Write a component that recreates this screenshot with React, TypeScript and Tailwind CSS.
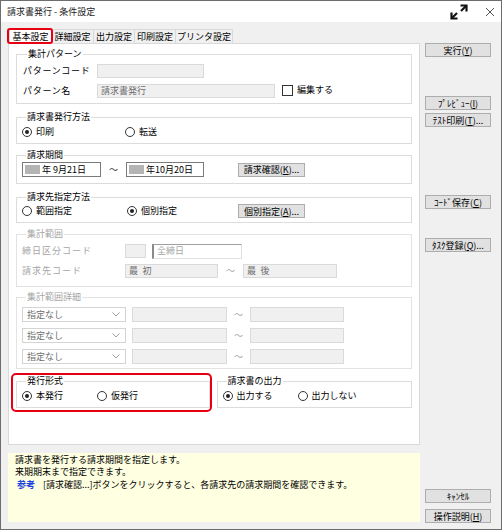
import React from 'react';

const Radio = ({ checked = false, label, className = '' }: { checked?: boolean; label: string; className?: string }) => (
  <span className={`flex items-center gap-[4px] ${className}`}>
    <span className="w-[10px] h-[10px] rounded-full border border-[#333] bg-white flex items-center justify-center shrink-0">
      {checked && <span className="w-[4px] h-[4px] rounded-full bg-[#222]" />}
    </span>
    <span>{label}</span>
  </span>
);

const Btn = ({ children, className = '' }: { children: React.ReactNode; className?: string }) => (
  <div className={`h-[14px] bg-[#e1e1e1] border border-[#adadad] flex items-center justify-center leading-none ${className}`}>
    {children}
  </div>
);

const Group = ({
  title,
  children,
  className = '',
  disabled = false,
}: {
  title: string;
  children: React.ReactNode;
  className?: string;
  disabled?: boolean;
}) => (
  <fieldset className={`border ${disabled ? 'border-[#e3e3e3] text-[#a6a6a6]' : 'border-[#dcdcdc]'} ${className}`}>
    <legend className="ml-[4px] px-[1px] leading-[12px]">{title}</legend>
    {children}
  </fieldset>
);

const Chevron = () => (
  <svg width="8" height="5" viewBox="0 0 8 5" className="shrink-0">
    <path d="M0.5 0.5 L4 4 L7.5 0.5" fill="none" stroke="#a0a0a0" strokeWidth="1" />
  </svg>
);

const DetailRow = () => (
  <div className="flex items-center h-[15px]">
    <div className="w-[104px] h-[15px] bg-white border border-[#d4d4d4] flex items-center justify-between pl-[4px] pr-[5px] text-[#6d6d6d]">
      <span>指定なし</span>
      <Chevron />
    </div>
    <div className="ml-[6px] w-[95px] h-[15px] bg-[#f0f0f0] border border-[#dadada]" />
    <span className="w-[23px] text-center text-[#a6a6a6]">～</span>
    <div className="w-[94px] h-[15px] bg-[#f0f0f0] border border-[#dadada]" />
  </div>
);

export default function App() {
  return (
    <div className="w-[502px] h-[530px] border border-[#6d6d6d] bg-[#f0f0f0] flex flex-col text-[9px] text-black font-['Noto_Sans_CJK_JP',sans-serif] overflow-hidden">
      {/* title bar */}
      <div className="h-[21px] bg-white flex items-center pl-[6px] pr-[6px] shrink-0">
        <span className="text-[#222]">請求書発行 - 条件設定</span>
        <div className="ml-auto flex items-center gap-[17px]">
          <svg width="18" height="16" viewBox="0 0 18 16">
            <path d="M2 14 L7 9" stroke="#111" strokeWidth="2.2" fill="none" />
            <path d="M1.5 8.5 L1.5 14.5 L7.5 14.5" stroke="#111" strokeWidth="2.2" fill="none" />
            <path d="M11 7 L16 2" stroke="#111" strokeWidth="2.2" fill="none" />
            <path d="M10.5 1.5 L16.5 1.5 L16.5 7.5" stroke="#111" strokeWidth="2.2" fill="none" />
          </svg>
          <svg width="10" height="10" viewBox="0 0 10 10">
            <path d="M1 1 L9 9 M9 1 L1 9" stroke="#555" strokeWidth="1" />
          </svg>
        </div>
      </div>

      <div className="flex flex-1 pl-[7px]">
        {/* left column */}
        <div className="w-[412px] flex flex-col pt-[5px] pb-[6px]">
          {/* tabs */}
          <div className="flex items-end h-[16px] pl-[1px]">
            <div className="relative w-[43px] h-[16px] bg-white border border-b-0 border-[#d9d9d9] flex items-center justify-center z-10 -mb-[1px]">
              基本設定
              <span className="absolute -left-[3px] -right-[2px] -top-[1px] -bottom-[0px] border-2 border-[#e60012] rounded-[3px]" />
            </div>
            <div className="w-[42px] h-[14px] bg-[#f0f0f0] border border-b-0 border-l-0 border-[#d9d9d9] flex items-center justify-center">詳細設定</div>
            <div className="w-[41px] h-[14px] bg-[#f0f0f0] border border-b-0 border-l-0 border-[#d9d9d9] flex items-center justify-center">出力設定</div>
            <div className="w-[41px] h-[14px] bg-[#f0f0f0] border border-b-0 border-l-0 border-[#d9d9d9] flex items-center justify-center">印刷設定</div>
            <div className="w-[57px] h-[14px] bg-[#f0f0f0] border border-b-0 border-l-0 border-[#d9d9d9] flex items-center justify-center">プリンタ設定</div>
          </div>

          {/* panel */}
          <div className="h-[402px] bg-white border border-[#d9d9d9] px-[7px] pt-[4px] flex flex-col">
            <Group title="集計パターン" className="pl-[6px] pt-[4px] pb-[5px]">
              <div className="flex items-center h-[14px]">
                <span className="w-[74px] tracking-[0.7px]">パターンコード</span>
                <div className="w-[107px] h-[14px] bg-[#f0f0f0] border border-[#dadada]" />
              </div>
              <div className="flex items-center h-[14px] mt-[6px]">
                <span className="w-[74px] tracking-[0.7px]">パターン名</span>
                <div className="w-[178px] h-[14px] bg-[#f0f0f0] border border-[#dadada] flex items-center pl-[3px] text-[#6d6d6d]">請求書発行</div>
                <span className="ml-[7px] w-[11px] h-[11px] border border-[#333] bg-white -mt-[2px]" />
                <span className="ml-[4px] -mt-[2px]">編集する</span>
              </div>
            </Group>

            <Group title="請求書発行方法" className="mt-[7px] pl-[5px] pt-[3px] pb-[5px]">
              <div className="flex items-center h-[12px]">
                <Radio checked label="印刷" className="w-[103px]" />
                <Radio label="転送" />
              </div>
            </Group>

            <Group title="請求期間" className="mt-[5px] pl-[5px] pt-[1px] pb-[6px]">
              <div className="flex items-center h-[15px]">
                <div className="w-[79px] h-[15px] bg-white border border-[#7a7a7a] flex items-center pl-[2px]">
                  <span className="w-[15px] h-[9px] bg-[#b4b4b4]" />
                  <span className="ml-[2px]">年 9月21日</span>
                </div>
                <span className="w-[25px] text-center text-[#333]">～</span>
                <div className="w-[78px] h-[15px] bg-white border border-[#7a7a7a] flex items-center pl-[2px]">
                  <span className="w-[15px] h-[9px] bg-[#b4b4b4]" />
                  <span className="ml-[2px]">年10月20日</span>
                </div>
                <Btn className="ml-[34px] w-[67px]">
                  請求確認(<span className="underline">K</span>)...
                </Btn>
              </div>
            </Group>

            <Group title="請求先指定方法" className="mt-[7px] pl-[5px] pt-[1px] pb-[4px]">
              <div className="flex items-center h-[14px]">
                <Radio label="範囲指定" className="w-[105px]" />
                <Radio checked label="個別指定" className="w-[111px]" />
                <Btn className="w-[67px]">
                  個別指定(<span className="underline">A</span>)...
                </Btn>
              </div>
            </Group>

            <Group title="集計範囲" disabled className="mt-[5px] pl-[5px] pt-[4px] pb-[8px]">
              <div className="flex items-center h-[14px]">
                <span className="w-[103px] tracking-[1px]">締日区分コード</span>
                <div className="w-[21px] h-[14px] bg-[#f0f0f0] border border-[#dadada]" />
                <div className="ml-[6px] w-[90px] h-[15px] bg-white border border-[#e0e0e0] border-l-2 border-l-[#8a8a8a] border-t-[#a0a0a0] flex items-center pl-[3px]">全締日</div>
              </div>
              <div className="flex items-center h-[14px] mt-[6px]">
                <span className="w-[103px] tracking-[1px]">請求先コード</span>
                <div className="w-[93px] h-[14px] bg-[#f0f0f0] border border-[#dadada] flex items-center pl-[3px] text-[#6d6d6d]">{'最\u2002初'}</div>
                <span className="w-[25px] text-center">～</span>
                <div className="w-[94px] h-[14px] bg-[#f0f0f0] border border-[#dadada] flex items-center pl-[3px] text-[#6d6d6d]">{'最\u2002後'}</div>
              </div>
            </Group>

            <Group title="集計範囲詳細" disabled className="mt-[4px] pl-[5px] pt-[4px] pb-[4px]">
              <div className="flex flex-col gap-[6px]">
                <DetailRow />
                <DetailRow />
                <DetailRow />
              </div>
            </Group>

            <div className="mt-[6px] flex gap-[7px]">
              <div className="relative w-[194px]">
                <Group title="発行形式" className="pl-[5px] pt-[3px] pb-[5px]">
                  <div className="flex items-center h-[12px]">
                    <Radio checked label="本発行" className="w-[75px]" />
                    <Radio label="仮発行" />
                  </div>
                </Group>
                <span className="absolute -left-[5px] -right-[2px] -top-[2px] -bottom-[4px] border-2 border-[#e60012] rounded-[5px]" />
              </div>
              <Group title="請求書の出力" className="w-[196px] pl-[5px] pt-[3px] pb-[5px]">
                <div className="flex items-center h-[12px]">
                  <Radio checked label="出力する" className="w-[75px]" />
                  <Radio label="出力しない" />
                </div>
              </Group>
            </div>
          </div>

          {/* help */}
          <div className="mt-[8px] h-[69px] bg-[#ffffe1] pl-[7px] pt-[1px] leading-[12px]">
            <p>請求書を発行する請求期間を指定します。</p>
            <p>来期期末まで指定できます。</p>
            <p className="mt-[1px] flex">
              <span className="ml-[2px] w-[26px] text-[#1a3fe0] font-bold">参考</span>
              <span>[請求確認...]ボタンをクリックすると、各請求先の請求期間を確認できます。</span>
            </p>
          </div>
        </div>

        {/* right column */}
        <div className="ml-[5px] w-[66px] flex flex-col pt-[21px] pb-[6px]">
          <Btn>実行(<span className="underline">Y</span>)</Btn>
          <Btn className="mt-[39px]">ﾌﾟﾚﾋﾞｭｰ(<span className="underline">I</span>)</Btn>
          <Btn className="mt-[3px]">ﾃｽﾄ印刷(<span className="underline">T</span>)...</Btn>
          <Btn className="mt-[68px]">ｺｰﾄﾞ保存(<span className="underline">C</span>)</Btn>
          <Btn className="mt-[29px]">ﾀｽｸ登録(<span className="underline">Q</span>)...</Btn>
          <Btn className="mt-auto">ｷｬﾝｾﾙ</Btn>
          <Btn className="mt-[6px]">操作説明(<span className="underline">H</span>)</Btn>
        </div>
      </div>
    </div>
  );
}
